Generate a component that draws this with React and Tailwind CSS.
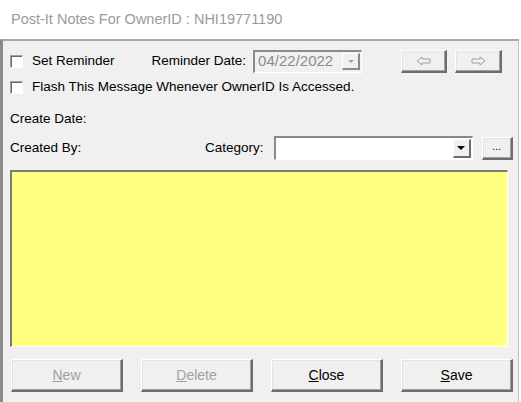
import React from 'react';

const font = { fontFamily: '"Liberation Sans", Arial, sans-serif' };

function Check() {
  return (
    <span className="inline-block w-[13px] h-[13px] bg-white border-t border-l border-[#a0a0a0] border-r border-b border-r-white border-b-white shadow-[inset_1px_1px_0_#696969]" />
  );
}

function RaisedButton({ children, className = '' }) {
  return (
    <div
      className={`flex items-center justify-center bg-[#f0f0f0] border-t border-l border-white border-r-2 border-b-2 border-r-[#6d6d6d] border-b-[#6d6d6d] shadow-[inset_-1px_-1px_0_#a0a0a0,inset_1px_1px_0_#e3e3e3] ${className}`}
    >
      {children}
    </div>
  );
}

function Arrow({ dir }) {
  return (
    <svg width="16" height="10" viewBox="0 0 16 10" className="text-[#a0a0a0]">
      {dir === 'left' ? (
        <path d="M1 5 L6 1 L6 3 L14 3 L14 7 L6 7 L6 9 Z" fill="none" stroke="currentColor" strokeWidth="1" />
      ) : (
        <path d="M15 5 L10 1 L10 3 L2 3 L2 7 L10 7 L10 9 Z" fill="none" stroke="currentColor" strokeWidth="1" />
      )}
    </svg>
  );
}

export default function App() {
  return (
    <div className="w-[521px] h-[402px] bg-white text-[13.5px] text-black flex flex-col overflow-hidden" style={font}>
      <div className="h-[39px] flex items-center pl-[11px] text-[14.5px] text-[#9a9a9a] bg-white">
        Post-It Notes For OwnerID : NHI19771190
      </div>
      <div className="flex-1 flex">
        <div className="flex-1 bg-[#f0f0f0] border-t-2 border-l-[3px] border-r border-t-[#a8a8a8] border-l-[#8a8a8a] border-r-[#bdbdbd] flex flex-col pl-[7px] pr-[5px]">
          <div className="flex items-center h-[24px] mt-[8px]">
            <Check />
            <span className="ml-[9px]">Set Reminder</span>
            <span className="ml-[37px]">Reminder Date:</span>
            <div className="ml-[7px] w-[109px] h-[23px] bg-[#f0f0f0] border-t-2 border-l-2 border-t-[#8a8a8a] border-l-[#8a8a8a] border-r border-b border-r-white border-b-white flex items-center">
              <span className="ml-[3px] flex-1 text-[#8c8c8c] text-[15px]">04/22/2022</span>
              <div className="w-[18px] h-[17px] mr-[1px] bg-[#f0f0f0] border-t border-l border-white border-r-2 border-b-2 border-r-[#8a8a8a] border-b-[#8a8a8a] flex items-center justify-center">
                <span className="block w-0 h-0 border-l-[3px] border-r-[3px] border-t-[3px] border-l-transparent border-r-transparent border-t-[#a0a0a0]" />
              </div>
            </div>
            <RaisedButton className="ml-[39px] w-[46px] h-[23px]"><Arrow dir="left" /></RaisedButton>
            <RaisedButton className="ml-[8px] w-[47px] h-[23px]"><Arrow dir="right" /></RaisedButton>
          </div>
          <div className="flex items-center h-[20px] mt-[4px]">
            <Check />
            <span className="ml-[9px]">Flash This Message Whenever OwnerID Is Accessed.</span>
          </div>
          <div className="h-[20px] mt-[12px] flex items-center">Create Date:</div>
          <div className="flex items-center h-[24px] mt-[7px]">
            <span className="w-[195px]">Created By:</span>
            <span>Category:</span>
            <div className="ml-[10px] w-[199px] h-[24px] bg-white border-t-2 border-l-2 border-t-[#8a8a8a] border-l-[#8a8a8a] border-r border-b border-r-white border-b-white flex items-center justify-end">
              <div className="w-[18px] h-[19px] mr-[1px] bg-[#f0f0f0] border-t border-l border-white border-r-2 border-b-2 border-r-[#6d6d6d] border-b-[#6d6d6d] flex items-center justify-center">
                <span className="block w-0 h-0 border-l-[4px] border-r-[4px] border-t-[4px] border-l-transparent border-r-transparent border-t-black" />
              </div>
            </div>
            <RaisedButton className="ml-[9px] w-[31px] h-[23px] text-[11px] pb-[2px]">...</RaisedButton>
          </div>
          <div className="mt-[10px] w-[498px] h-[177px] shrink-0 bg-[#ffff80] border-t-2 border-l-2 border-t-[#7a7a7a] border-l-[#7a7a7a] border-r border-b border-r-white border-b-white" />
          <div className="flex mt-[12px] ml-[1px] gap-[18px]">
            <RaisedButton className="w-[112px] h-[33px] text-[#a0a0a0] text-[14px]"><span><span className="underline">N</span>ew</span></RaisedButton>
            <RaisedButton className="w-[112px] h-[33px] text-[#a0a0a0] text-[14px]"><span><span className="underline">D</span>elete</span></RaisedButton>
            <RaisedButton className="w-[112px] h-[33px] text-[14px]"><span><span className="underline">C</span>lose</span></RaisedButton>
            <RaisedButton className="w-[112px] h-[33px] text-[14px]"><span><span className="underline">S</span>ave</span></RaisedButton>
          </div>
        </div>
        <div className="w-[4px] bg-white" />
      </div>
    </div>
  );
}
